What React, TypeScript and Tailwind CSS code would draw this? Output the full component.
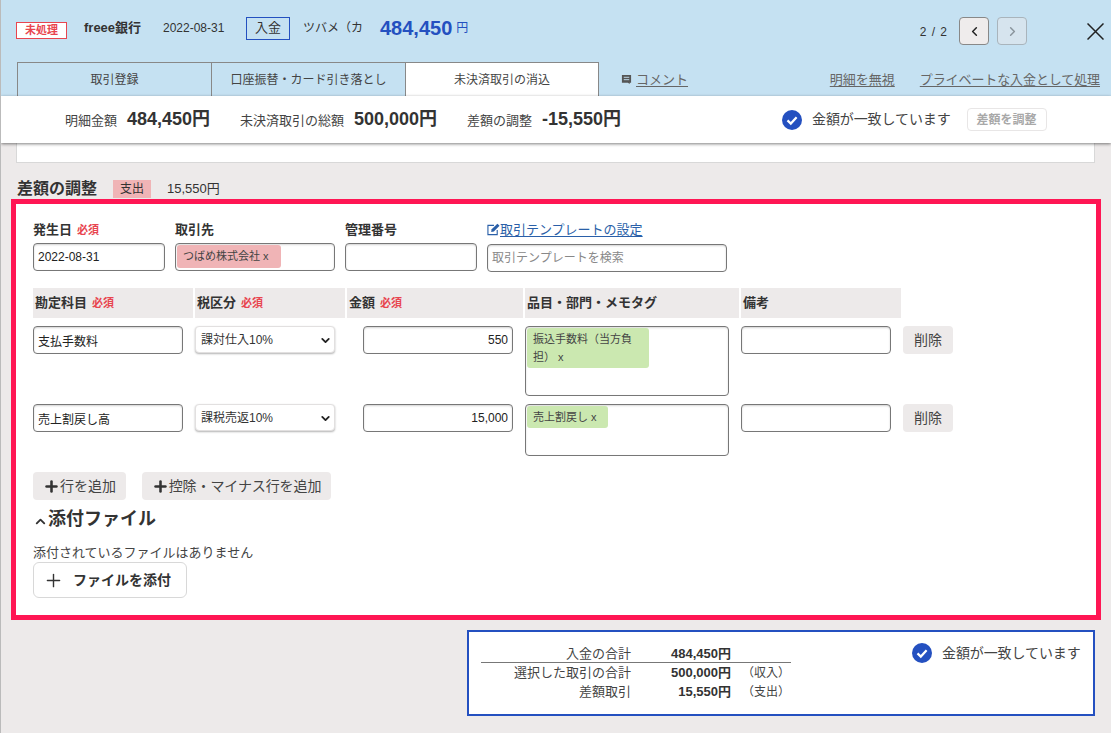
import { Plus, ChevronLeft, ChevronRight, ChevronDown, ChevronUp } from "lucide-react";

const inputCls =
  "h-[28px] rounded-[4px] border border-[#777] bg-white px-[4px] text-[12px] text-[#222] shadow-[inset_0_1px_2px_rgba(0,0,0,0.18)] outline-none";

function Required() {
  return <span className="ml-[5px] text-[11px] font-bold text-[#e8454f]">必須</span>;
}

function CheckIcon({ size = "w-[20px] h-[20px]" }: { size?: string }) {
  return (
    <svg viewBox="0 0 20 20" className={`${size} shrink-0`}>
      <circle cx="10" cy="10" r="10" fill="#2450c0" />
      <path d="M5.5 10.4 L8.8 13.6 L14.6 7.2" fill="none" stroke="#fff" strokeWidth="2.2" />
    </svg>
  );
}

function Tab({ label, active, w }: { label: string; active?: boolean; w: string }) {
  return (
    <div
      className={`${w} flex h-[34px] items-center justify-center border-t border-l border-[#888] text-[12px] text-[#444] ${
        active ? "border-r bg-white text-[#333]" : ""
      }`}
    >
      {label}
    </div>
  );
}

function Header() {
  return (
    <div className="flex h-[96px] flex-col bg-[#c5e1f2] text-[#333]">
      <div className="flex h-[62px] items-start pl-[15px] pr-[7px]">
        <div className="mt-[16px] flex items-center">
          <span className="mt-[5px] flex h-[17px] w-[51px] items-center justify-center border border-[#e8454f] bg-white text-[11px] font-bold text-[#e8454f]">
            未処理
          </span>
          <span className="ml-[17px] w-[79px] text-[13px] font-bold">freee銀行</span>
          <span className="w-[83px] text-[12px]">2022-08-31</span>
          <span className="flex h-[23px] w-[44px] items-center justify-center border border-[#2450c0] text-[13px]">入金</span>
          <span className="ml-[13px] w-[77px] text-[12px]">ツバメ（カ</span>
          <span className="text-[20px] leading-[24px] font-bold text-[#2450c0]">484,450</span>
          <span className="ml-[4px] text-[12px] text-[#2450c0]">円</span>
        </div>
        <div className="ml-auto mt-[17px] flex items-start">
          <span className="mt-[6px] mr-[11px] text-[12px] tracking-[1px]">2 / 2</span>
          <div className="flex h-[28px] w-[30px] items-center justify-center rounded-[4px] border border-[#888] bg-[#efecec]">
            <ChevronLeft size={15} strokeWidth={2.4} className="text-[#222]" />
          </div>
          <div className="ml-[8px] flex h-[28px] w-[30px] items-center justify-center rounded-[4px] border border-[#a9b4bc] bg-[#d6e4ee]">
            <ChevronRight size={15} strokeWidth={2.4} className="text-[#8a949c]" />
          </div>
          <svg viewBox="0 0 17 17" className="ml-[60px] mt-[6px] h-[17px] w-[17px]" stroke="#222" strokeWidth="1.5">
            <path d="M0.5 0.5 L16.5 16.5 M16.5 0.5 L0.5 16.5" />
          </svg>
        </div>
      </div>
      <div className="flex h-[34px] pl-[16px] pr-[11px]">
        <Tab label="取引登録" w="w-[194px]" />
        <Tab label="口座振替・カード引き落とし" w="w-[194px]" />
        <Tab label="未決済取引の消込" active w="w-[194px]" />
        <div className="ml-[22px] flex items-start pt-[8px] text-[13px] text-[#666]">
          <svg viewBox="0 0 12 12" className="mt-[4px] mr-[4px] h-[11px] w-[11px]">
            <path d="M1 1h10v8.5H9.5V11L7.5 9.5H1z" fill="#555" />
            <path d="M3 3.6h6M3 6.2h6" stroke="#c5e1f2" strokeWidth="1" />
          </svg>
          <span className="underline underline-offset-2">コメント</span>
        </div>
        <div className="ml-auto flex items-start gap-[25px] pt-[8px] text-[13px] text-[#666]">
          <span className="underline underline-offset-2">明細を無視</span>
          <span className="tracking-[-0.1px] underline underline-offset-2">プライベートな入金として処理</span>
        </div>
      </div>
    </div>
  );
}

function SummaryBar() {
  return (
    <div className="relative z-10 flex h-[47px] items-center bg-white pl-[64px] text-[#333] shadow-[0_1px_3px_rgba(0,0,0,0.5)]">
      <span className="mt-[2px] w-[52px] text-[13px] text-[#444]">明細金額</span>
      <span className="ml-[10px] w-[82px] text-[18px] font-bold whitespace-nowrap">484,450円</span>
      <span className="ml-[31px] mt-[2px] w-[104px] text-[13px] text-[#444]">未決済取引の総額</span>
      <span className="ml-[10px] w-[83px] text-[18px] font-bold whitespace-nowrap">500,000円</span>
      <span className="ml-[30px] mt-[2px] w-[65px] text-[13px] text-[#444]">差額の調整</span>
      <span className="ml-[10px] w-[80px] text-[18px] font-bold whitespace-nowrap">-15,550円</span>
      <div className="ml-[160px] flex items-center">
        <CheckIcon />
        <span className="ml-[10px] text-[14px] tracking-[-0.1px] text-[#444]">金額が一致しています</span>
      </div>
      <div className="ml-[16px] flex h-[23px] w-[80px] items-center justify-center rounded-[4px] border border-[#e8e6e6] text-[12px] font-bold text-[#a8a8a8]">
        差額を調整
      </div>
    </div>
  );
}

function Tag({ color, className, children }: { color: string; className?: string; children: React.ReactNode }) {
  return (
    <div className={`${color} ${className ?? ""} rounded-[3px] px-[6px] py-[2px] text-[11px] leading-[18px] text-[#444]`}>{children}</div>
  );
}

function TableRow({
  account,
  tax,
  amount,
  boxH,
  tag,
}: {
  account: string;
  tax: string;
  amount: string;
  boxH: string;
  tag: React.ReactNode;
}) {
  return (
    <div className="grid grid-cols-[162px_168px_162px_216px_162px_50px] items-start">
      <input readOnly value={account} className={`${inputCls} w-[150px]`} />
      <div className="relative w-[140px]">
        <select
          value={tax}
          onChange={() => {}}
          className="h-[27px] w-full appearance-none rounded-[4px] border border-[#e2e0e0] bg-white px-[5px] text-[12px] text-[#333] shadow-[0_1px_2px_rgba(0,0,0,0.3)]"
        >
          <option>{tax}</option>
        </select>
        <ChevronDown size={13} strokeWidth={3.4} className="pointer-events-none absolute top-[8px] right-[3px] text-[#222]" />
      </div>
      <input readOnly value={amount} className={`${inputCls} w-[150px] text-right`} />
      <div className={`${boxH} w-[204px] rounded-[4px] border border-[#777] bg-white p-[1px] shadow-[inset_0_1px_2px_rgba(0,0,0,0.15)]`}>
        {tag}
      </div>
      <input readOnly className={`${inputCls} w-[150px]`} />
      <div className="flex h-[28px] w-[50px] items-center justify-center rounded-[4px] bg-[#edeaea] text-[14px] text-[#444]">削除</div>
    </div>
  );
}

function AdjustForm() {
  return (
    <div className="mr-[10px] ml-[10px] mt-[1px] h-[421px] border-[5px] border-[#ff1654] bg-white pl-[17px] text-[#333]">
      <div className="mt-[16px] flex">
        <div className="w-[142px]">
          <div className="h-[23px] text-[13px] font-bold">
            発生日<Required />
          </div>
          <input readOnly value="2022-08-31" className={`${inputCls} w-[132px]`} />
        </div>
        <div className="w-[170px]">
          <div className="h-[23px] text-[13px] font-bold">取引先</div>
          <div className="h-[28px] w-[160px] rounded-[4px] border border-[#777] bg-white p-[1px] shadow-[inset_0_1px_2px_rgba(0,0,0,0.15)]">
            <Tag color="bg-[#f0b4b6]" className="h-[23px] w-[104px]">つばめ株式会社 x</Tag>
          </div>
        </div>
        <div className="w-[142px]">
          <div className="h-[23px] text-[13px] font-bold">管理番号</div>
          <input readOnly className={`${inputCls} w-[132px]`} />
        </div>
        <div className="w-[240px]">
          <div className="flex h-[24px] items-start text-[13px] text-[#2a5fa8]">
            <svg viewBox="0 0 14 14" className="mt-[3px] h-[13px] w-[13px]" fill="none" stroke="#2a5fa8" strokeWidth="1.2">
              <path d="M11 7.5V12.5H1V2.5H7.5" />
              <path d="M4.5 9.8 L5 6.8 L11.2 0.8 L13.5 3 L7.4 9.2z" fill="#2a5fa8" stroke="none" />
            </svg>
            <span className="underline underline-offset-2">取引テンプレートの設定</span>
          </div>
          <input readOnly placeholder="取引テンプレートを検索" className={`${inputCls} w-[240px] placeholder:text-[#888]`} />
        </div>
      </div>

      <div className="mt-[16px] grid h-[30px] grid-cols-[160px_150px_176px_214px_160px] gap-x-[2px] text-[13px] font-bold">
        <div className="flex items-center bg-[#edeaea] pl-[2px]">勘定科目<Required /></div>
        <div className="flex items-center bg-[#edeaea] pl-[2px]">税区分<Required /></div>
        <div className="flex items-center bg-[#edeaea] pl-[2px]">金額<Required /></div>
        <div className="flex items-center bg-[#edeaea] pl-[2px]">品目・部門・メモタグ</div>
        <div className="flex items-center bg-[#edeaea] pl-[2px]">備考</div>
      </div>

      <div className="mt-[8px] flex flex-col gap-[8px]">
        <TableRow
          account="支払手数料"
          tax="課対仕入10%"
          amount="550"
          boxH="h-[70px]"
          tag={<Tag color="bg-[#cbe8b0]" className="w-[122px]">振込手数料（当方負担） x</Tag>}
        />
        <TableRow
          account="売上割戻し高"
          tax="課税売返10%"
          amount="15,000"
          boxH="h-[52px]"
          tag={<Tag color="bg-[#cbe8b0]" className="w-[81px]">売上割戻し x</Tag>}
        />
      </div>

      <div className="mt-[16px] flex gap-[16px] text-[14px] text-[#444]">
        <div className="flex h-[28px] w-[93px] items-center justify-center rounded-[4px] bg-[#edeaea]">
          <Plus size={17} strokeWidth={3.6} className="text-[#333]" />行を追加
        </div>
        <div className="flex h-[28px] w-[189px] items-center justify-center tracking-[-0.1px] rounded-[4px] bg-[#edeaea]">
          <Plus size={17} strokeWidth={3.6} className="text-[#333]" />控除・マイナス行を追加
        </div>
      </div>
      <div className="mt-[6px] flex h-[26px] items-center text-[18px] font-bold">
        <ChevronUp size={15} strokeWidth={3} className="mt-[5px] text-[#333]" />添付ファイル
      </div>
      <div className="mt-[12px] text-[13px] leading-[18px] text-[#444]">添付されているファイルはありません</div>
      <div className="flex h-[36px] w-[154px] items-center rounded-[6px] border border-[#d8d8d8] bg-white pl-[9px] text-[14px] font-bold">
        <Plus size={21} strokeWidth={1.6} className="mr-[9px]" />ファイルを添付
      </div>
    </div>
  );
}

function TotalRow({ label, value, note, h = "h-[19px]" }: { label: string; value: string; note?: string; h?: string }) {
  return (
    <div className={`grid ${h} grid-cols-[150px_100px_60px] items-center text-[13px] text-[#444]`}>
      <span className="text-right whitespace-nowrap">{label}</span>
      <span className="text-right font-bold text-[#333]">{value}</span>
      <span className="pl-[11px] text-[12px]">{note}</span>
    </div>
  );
}

function Totals() {
  return (
    <div className="mt-[10px] mr-[16px] ml-auto flex h-[86px] w-[628px] border-2 border-[#2450c0] bg-white pt-[12px] pl-[12px]">
      <div className="w-[310px]">
        <TotalRow label="入金の合計" value="484,450円" h="h-[18px]" />
        <div className="border-t border-[#777]">
          <TotalRow label="選択した取引の合計" value="500,000円" note="（収入）" />
          <TotalRow label="差額取引" value="15,550円" note="（支出）" />
        </div>
      </div>
      <div className="ml-[121px] -mt-[1px] flex h-[20px] items-center">
        <CheckIcon />
        <span className="ml-[10px] text-[14px] tracking-[-0.1px] text-[#444]">金額が一致しています</span>
      </div>
    </div>
  );
}

export default function App() {
  return (
    <div className="h-[733px] w-[1111px] overflow-hidden border-l border-[#bbb] bg-[#edeaea] font-['Liberation_Sans','Noto_Sans_CJK_JP',sans-serif]">
      <Header />
      <SummaryBar />
      <div className="mr-[16px] ml-[15px] h-[20px] border border-t-0 border-[#d8d8d8] bg-white" />
      <div className="ml-[16px] flex h-[35px] items-center pt-[16px] text-[#333]">
        <span className="text-[16px] font-bold">差額の調整</span>
        <span className="ml-[16px] flex h-[18px] w-[38px] items-center justify-center bg-[#f0b4b6] text-[12px]">支出</span>
        <span className="ml-[16px] text-[13px]">15,550円</span>
      </div>
      <AdjustForm />
      <Totals />
    </div>
  );
}
